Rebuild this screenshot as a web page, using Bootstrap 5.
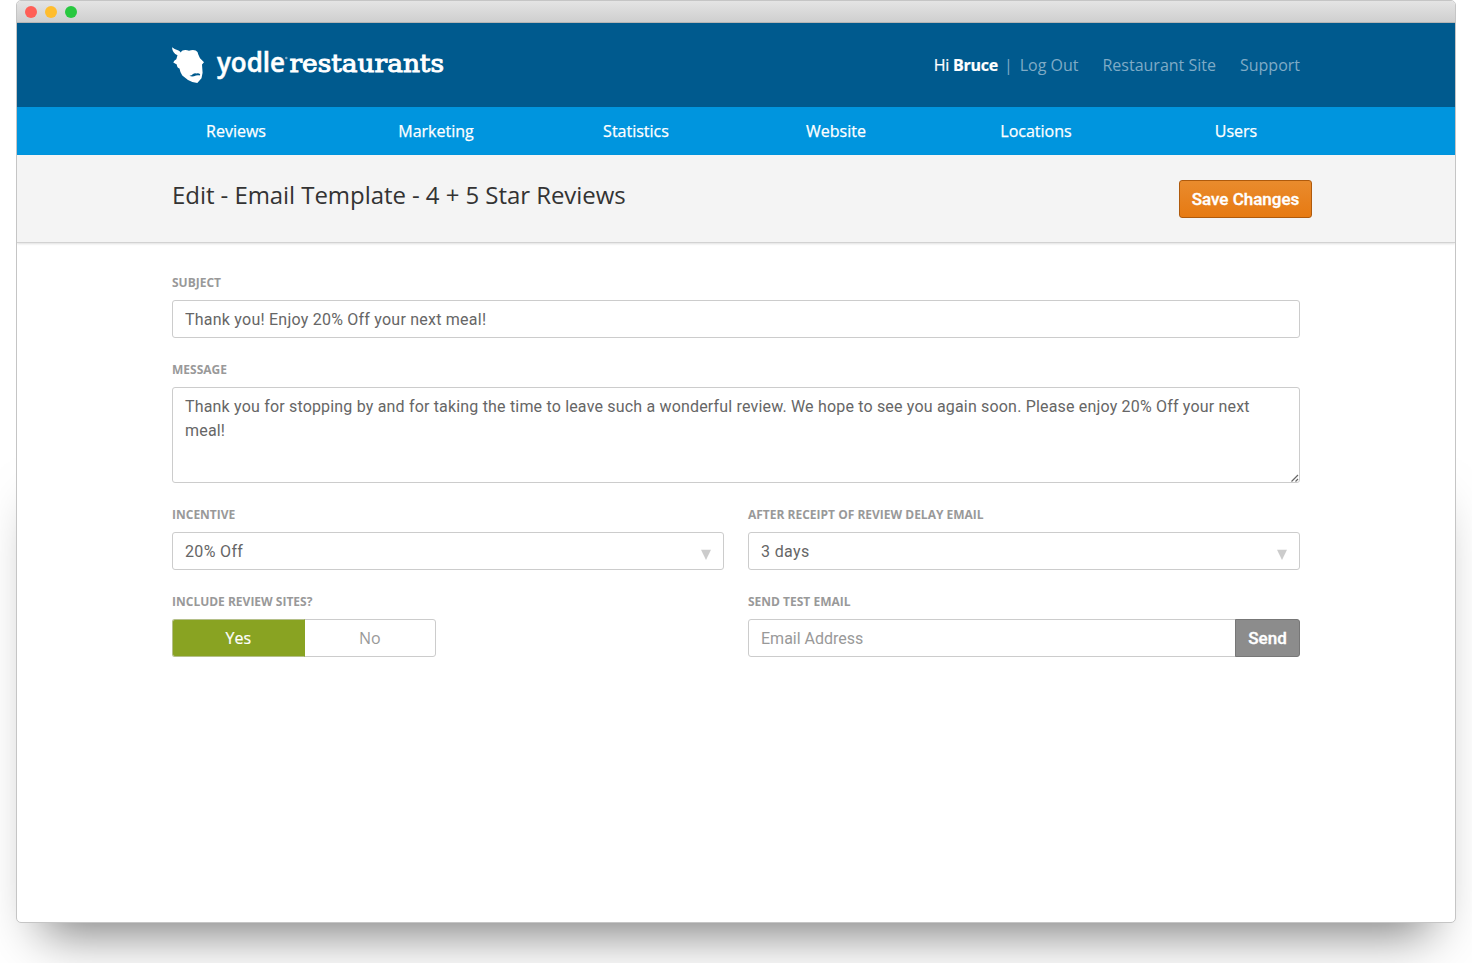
<!DOCTYPE html>
<html lang="en">
<head>
<meta charset="utf-8">
<meta name="viewport" content="width=device-width, initial-scale=1">
<title>Edit Email Template</title>
<link href="https://cdn.jsdelivr.net/npm/bootstrap@5.3.0/dist/css/bootstrap.min.css" rel="stylesheet">
<style>
html, body { height: 963px; overflow: hidden; }
body { font-family: "Open Sans", sans-serif; background: #fff; color: #333; }
.stage { padding: 0 16px; }
.window { height: 923px; z-index: 0; }
.window::before { content: ""; position: absolute; z-index: -1; left: 26px; right: 26px; top: 500px; bottom: 0; box-shadow: 0 10px 48px rgba(0,0,0,.52); }
.frame { height: 923px; border: 1px solid #c5c5c5; border-radius: 5px; overflow: hidden; }
.titlebar { height: 22px; background: linear-gradient(#e4e4e4, #cfcfcf); padding-left: 8px; gap: 8px; border-bottom: 1px solid #b5b5b5; }
.dot { width: 12px; height: 12px; border-radius: 50%; }
.inner { width: 1128px; margin-left: 155px; }
.top { height: 84px; background: #005a8e; }
.account { font-size: 16px; line-height: 24px; color: #fff; }
.account a, .account .sep { color: #7fabc6; }
.account .sep { margin: 0 7px 0 6px; }
.greeting { letter-spacing: -.25px; -webkit-text-stroke: .2px #fff; }
.main-menu { height: 48px; background: #0095de; }
.main-menu .nav { width: 1200px; margin-left: 119px; }
.main-menu .nav-link { color: #fff; font-size: 16px; line-height: 24px; padding: 12px 0; -webkit-text-stroke: .25px #fff; }
.heading { height: 88px; background: #f4f4f4; border-bottom: 1px solid #d2d2d2; box-shadow: 0 1px 2px rgba(0,0,0,.12); }
.heading h1 { font-size: 24px; line-height: 36px; font-weight: 400; color: #333; padding-top: 22px; letter-spacing: -.06px; }
.btn-save { width: 133px; height: 38px; margin: 25px -12px 0 0; padding: 0; font: 500 17px/36px Roboto, sans-serif; color: #fff; background: linear-gradient(#e98b2d, #e77a12); border: 1px solid #af5a0c; border-radius: 3px; -webkit-text-stroke: .35px #fff; }
.btn-save:hover { color: #fff; }
.form-area { padding-top: 28px; }
.form-label { display: block; font-size: 12px; line-height: 24px; font-weight: 700; color: #999; margin: 0 0 5px; text-transform: uppercase; }
.field { margin-bottom: 20px; }
.form-control, .form-select { font: 400 16px/24px Roboto, sans-serif; letter-spacing: .23px; color: #666; height: 38px; padding: 6px 12px; border: 1px solid #ccc; border-radius: 3px; background-image: none; }
.form-select { padding: 7px 12px 5px; letter-spacing: .35px; }
.form-control::placeholder { color: #999; letter-spacing: 0; }
textarea.form-control { height: 96px; padding-top: 7px; letter-spacing: .18px; resize: none; display: block; }
.grip { position: absolute; right: 1px; bottom: 1px; }
.arrow { position: absolute; right: 13px; top: 17px; }
.toggle { width: 264px; height: 38px; }
.toggle .btn { width: 132px; font-size: 16px; line-height: 24px; padding: 6px 0; border: 1px solid #ccc; border-radius: 3px; color: #999; }
.toggle .btn.active { background: #89a322; color: #fff; border-color: #b5c08a; border-right-color: #89a322; -webkit-text-stroke: .2px #fff; }
.btn-send { width: 65px; padding: 0; font: 500 17px/36px Roboto, sans-serif; color: #fff; background: #8c8c8c; border: 1px solid #777; border-radius: 3px; -webkit-text-stroke: .35px #fff; }
</style>
</head>
<body>
<div class="stage">
<div class="window position-relative">
<div class="frame bg-white">
  <div class="titlebar d-flex align-items-center">
    <span class="dot" style="background:#ff5f57"></span><span class="dot" style="background:#ffbd2e"></span><span class="dot" style="background:#28c840"></span>
  </div>
  <header class="top">
    <div class="inner d-flex justify-content-between">
      <svg width="280" height="84" viewBox="172 23 280 84" role="img" aria-label="yodle restaurants">
        <path fill="#fff" d="M172 47.300Q175 49.800 178.500 50.600Q180.300 51.500 180.700 52.500L182 50.700Q185.500 49.200 189 50.800Q192.500 49.300 195.700 50.400Q198 51.500 198.300 54.500L200 58.300L204 62.200L202 64.500L202.600 72.700L201.500 78.300L197.300 83Q192 82.500 188 80L182.300 75.500Q180 72 179.500 68.500Q177 68 176.800 64.500L173.300 62.500Q173.800 60.800 176.300 59.300L177.500 55.300Q172.300 53 172 47.300Z"/>
        <path fill="#005a8e" d="M189.500 75.800Q191.800 75.800 193 74Q194.800 72.600 196.300 73.500Q198.500 72.600 200.200 74.200L199.700 75.500Q198 74.900 196 75.600Q192 77.200 189.500 75.800Z"/>
        <g fill="#fff">
          <text x="217" y="71.500" font-family="Open Sans, sans-serif" font-size="27" font-weight="600" stroke="#fff" stroke-width=".5" textLength="68" lengthAdjust="spacingAndGlyphs">yodle</text>
          <circle cx="286.300" cy="58" r="1.300" fill="#7fabc6"/>
          <text x="289.500" y="71.500" font-family="DejaVu Serif, serif" font-size="24" stroke="#fff" stroke-width=".95" textLength="154.500" lengthAdjust="spacingAndGlyphs">restaurants</text>
        </g>
      </svg>
      <div class="account d-flex align-items-center">
        <span class="greeting">Hi <b>Bruce</b></span><span class="sep">|</span>
        <a class="text-decoration-none me-4" href="#">Log Out</a>
        <a class="text-decoration-none me-4" href="#">Restaurant Site</a>
        <a class="text-decoration-none" href="#">Support</a>
      </div>
    </div>
  </header>
  <nav class="main-menu">
    <div class="nav nav-justified">
      <a class="nav-link nav-item" href="#">Reviews</a>
      <a class="nav-link nav-item" href="#">Marketing</a>
      <a class="nav-link nav-item" href="#">Statistics</a>
      <a class="nav-link nav-item" href="#">Website</a>
      <a class="nav-link nav-item" href="#">Locations</a>
      <a class="nav-link nav-item" href="#">Users</a>
    </div>
  </nav>
  <div class="heading">
    <div class="inner d-flex justify-content-between align-items-start">
      <h1 class="m-0">Edit - Email Template - 4 + 5 Star Reviews</h1>
      <button class="btn btn-save">Save Changes</button>
    </div>
  </div>
  <main class="inner form-area">
    <div class="field">
      <label class="form-label" for="subject">Subject</label>
      <input id="subject" class="form-control" value="Thank you! Enjoy 20% Off your next meal!">
    </div>
    <div class="field">
      <label class="form-label" for="message">Message</label>
      <div class="position-relative">
        <textarea id="message" class="form-control">Thank you for stopping by and for taking the time to leave such a wonderful review. We hope to see you again soon. Please enjoy 20% Off your next meal!</textarea>
        <svg class="grip" width="8" height="8" viewBox="0 0 8 8" stroke="#666" stroke-width="1.200"><path d="M.5 7.500L7 1M4.500 7.500L7 5"/></svg>
      </div>
    </div>
    <div class="row">
      <div class="col-6 field">
        <label class="form-label" for="incentive">Incentive</label>
        <div class="position-relative">
          <select id="incentive" class="form-select"><option>20% Off</option></select>
          <svg class="arrow" width="10" height="11" viewBox="0 0 10 11"><path fill="#ccc" d="M0 .8H10L5 11Z"/></svg>
        </div>
      </div>
      <div class="col-6 field">
        <label class="form-label" for="delay">After receipt of review delay email</label>
        <div class="position-relative">
          <select id="delay" class="form-select"><option>3 days</option></select>
          <svg class="arrow" width="10" height="11" viewBox="0 0 10 11"><path fill="#ccc" d="M0 .8H10L5 11Z"/></svg>
        </div>
      </div>
      <div class="col-6">
        <span class="form-label">Include review sites?</span>
        <div class="btn-group toggle"><button class="btn active">Yes</button><button class="btn">No</button></div>
      </div>
      <div class="col-6">
        <label class="form-label" for="email">Send test email</label>
        <div class="input-group"><input id="email" class="form-control" placeholder="Email Address"><button class="btn btn-send">Send</button></div>
      </div>
    </div>
  </main>
</div>
</div>
</div>
<script src="https://cdn.jsdelivr.net/npm/bootstrap@5.3.0/dist/js/bootstrap.bundle.min.js"></script>
</body>
</html>
